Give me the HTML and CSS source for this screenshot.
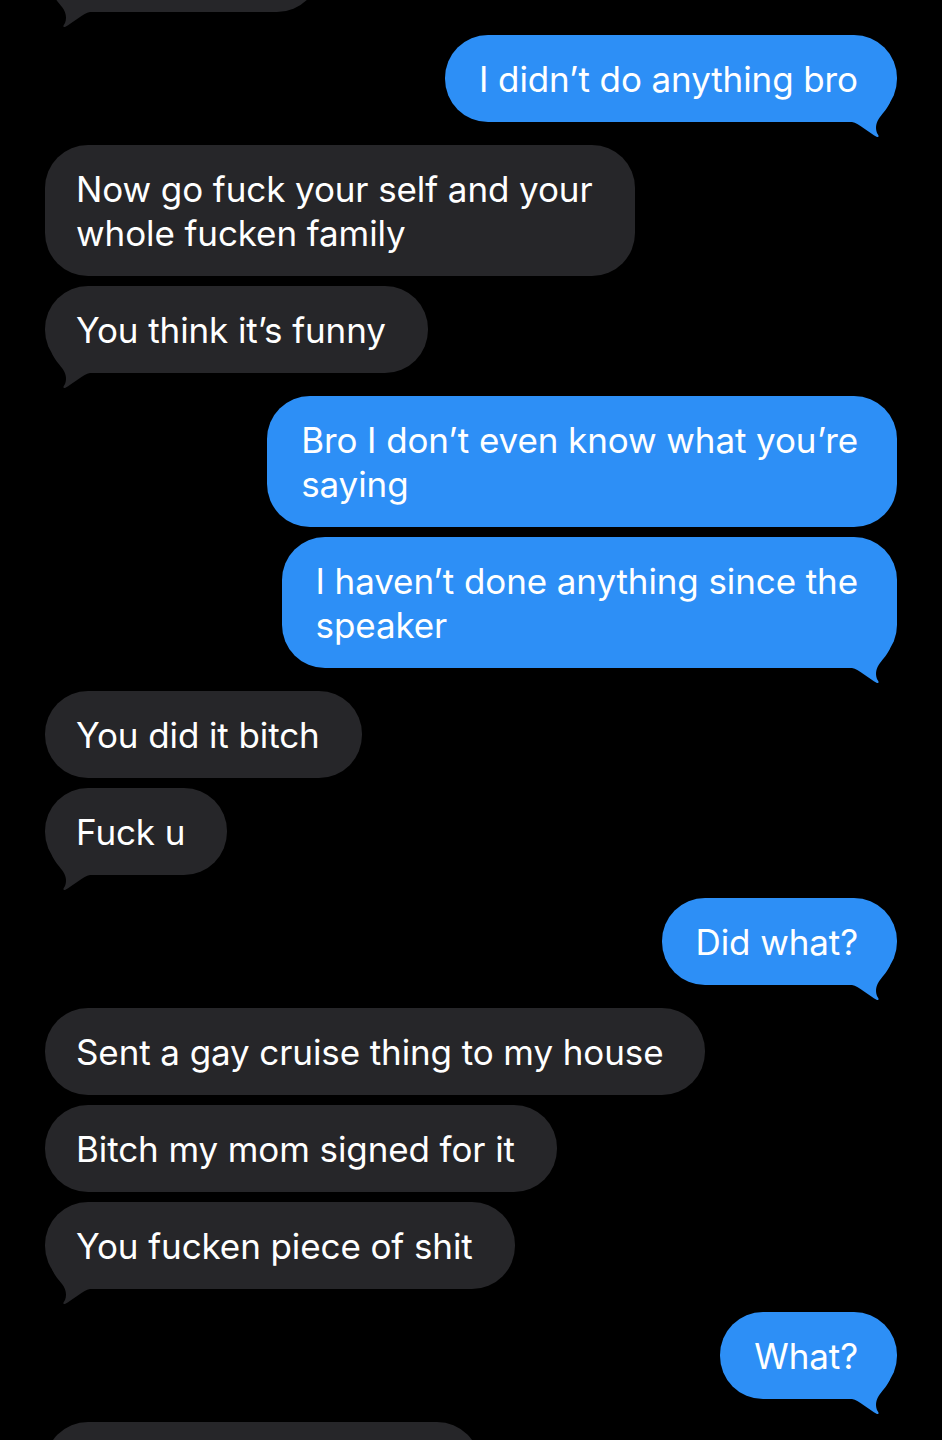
FILE: index.html
```html
<!DOCTYPE html>
<html lang="en">
<head>
  <meta charset="UTF-8" />
  <title>Messages</title>
  <link rel="stylesheet" href="styles.css">
</head>
<body>
  <div class="thread">
    <div class="msg in cut-top">
      <svg class="tail" viewBox="0 0 50 36"><path d="M0 0 L43 0 C41 6 36 11 33 15 C29 20 28 26 30 31 L31.5 33.5 Q32 35.5 30 35 C22 31 12 21 5 20 L0 20 Z"/></svg>
    </div>

    <div class="msg out new">I didn’t do anything bro
      <svg class="tail" viewBox="0 0 50 36"><path d="M0 0 L43 0 C41 6 36 11 33 15 C29 20 28 26 30 31 L31.5 33.5 Q32 35.5 30 35 C22 31 12 21 5 20 L0 20 Z"/></svg>
    </div>

    <div class="msg in new">Now go fuck your self and your<br>whole fucken family</div>
    <div class="msg in">You think it’s funny
      <svg class="tail" viewBox="0 0 50 36"><path d="M0 0 L43 0 C41 6 36 11 33 15 C29 20 28 26 30 31 L31.5 33.5 Q32 35.5 30 35 C22 31 12 21 5 20 L0 20 Z"/></svg>
    </div>

    <div class="msg out new">Bro I don’t even know what you’re<br>saying</div>
    <div class="msg out">I haven’t done anything since the<br>speaker
      <svg class="tail" viewBox="0 0 50 36"><path d="M0 0 L43 0 C41 6 36 11 33 15 C29 20 28 26 30 31 L31.5 33.5 Q32 35.5 30 35 C22 31 12 21 5 20 L0 20 Z"/></svg>
    </div>

    <div class="msg in new">You did it bitch</div>
    <div class="msg in">Fuck u
      <svg class="tail" viewBox="0 0 50 36"><path d="M0 0 L43 0 C41 6 36 11 33 15 C29 20 28 26 30 31 L31.5 33.5 Q32 35.5 30 35 C22 31 12 21 5 20 L0 20 Z"/></svg>
    </div>

    <div class="msg out new">Did what?
      <svg class="tail" viewBox="0 0 50 36"><path d="M0 0 L43 0 C41 6 36 11 33 15 C29 20 28 26 30 31 L31.5 33.5 Q32 35.5 30 35 C22 31 12 21 5 20 L0 20 Z"/></svg>
    </div>

    <div class="msg in new">Sent a gay cruise thing to my house</div>
    <div class="msg in">Bitch my mom signed for it</div>
    <div class="msg in">You fucken piece of shit
      <svg class="tail" viewBox="0 0 50 36"><path d="M0 0 L43 0 C41 6 36 11 33 15 C29 20 28 26 30 31 L31.5 33.5 Q32 35.5 30 35 C22 31 12 21 5 20 L0 20 Z"/></svg>
    </div>

    <div class="msg out new">What?
      <svg class="tail" viewBox="0 0 50 36"><path d="M0 0 L43 0 C41 6 36 11 33 15 C29 20 28 26 30 31 L31.5 33.5 Q32 35.5 30 35 C22 31 12 21 5 20 L0 20 Z"/></svg>
    </div>

    <div class="msg in new cut-bottom"></div>
  </div>
</body>
</html>
```

FILE: styles.css
```css
body {
  margin: 0;
  padding: 0;
  background: #000;
  font-family: Inter, 'Noto Sans', sans-serif;
}
.thread {
  display: flex;
  flex-direction: column;
  padding: 0 45px;
  height: 1440px;
  overflow: hidden;
}
.msg {
  position: relative;
  flex-shrink: 0;
  box-sizing: border-box;
  max-width: 680px;
  min-height: 87px;
  padding: 22px 39px 21px 31px;
  margin-top: 10px;
  border-radius: 43px;
  font-size: 35px;
  letter-spacing: -0.1px;
  line-height: 44px;
  color: #fff;
  white-space: nowrap;
}
.msg.new {
  margin-top: 23px;
}
.in {
  align-self: flex-start;
  padding-right: 42px;
  background: #262629;
}
.out {
  align-self: flex-end;
  padding-left: 34px;
  background: #2d8ff6;
}
.tail {
  position: absolute;
  right: 0;
  bottom: -16px;
  width: 50px;
  height: 36px;
}
.out .tail path {
  fill: #2d8ff6;
}
.in .tail {
  right: auto;
  left: 0;
  transform: scaleX(-1);
}
.in .tail path {
  fill: #262629;
}
.cut-top {
  margin-top: -75px;
  width: 275px;
}
.cut-bottom {
  width: 435px;
}
```
